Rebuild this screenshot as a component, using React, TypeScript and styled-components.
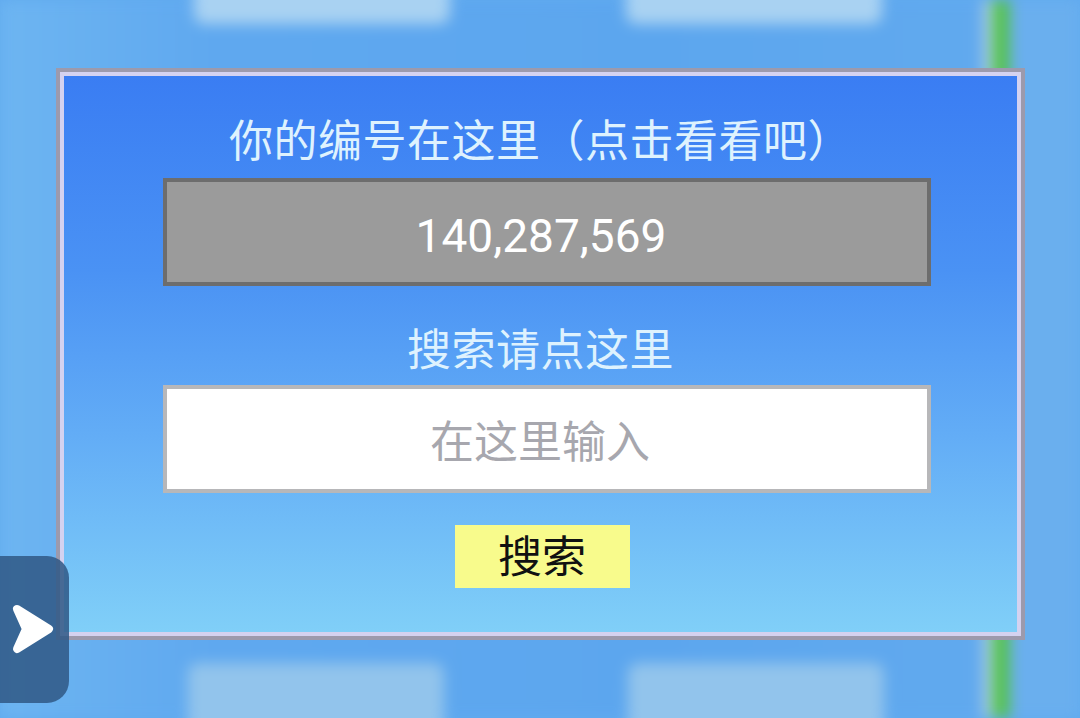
import React from "react";
import styled, { createGlobalStyle } from "styled-components";

const Global = createGlobalStyle`
  html, body {
    margin: 0;
    padding: 0;
    background: #60aaef;
    overflow: hidden;
  }
  * { box-sizing: border-box; }
`;

const CJK = `"Noto Sans CJK SC", "Noto Sans", sans-serif`;

const Screen = styled.div`
  position: relative;
  width: 1080px;
  height: 718px;
  overflow: hidden;
  background: #60aaef;
  font-family: ${CJK};
`;

/* Blurred game board behind the dialog */
const Scene = styled.div`
  display: flex;
  width: 100%;
  height: 100%;
  filter: blur(7px);
  background: linear-gradient(90deg, #6db5f1 0%, #5fa8ef 20%, #5ca6ee 60%, #62aaee 100%);
`;

const SceneMain = styled.div`
  width: 980px;
  display: flex;
  flex-direction: column;
  justify-content: space-between;
`;

const CardRow = styled.div<{ $edge: "top" | "bottom" }>`
  display: flex;
  gap: ${(p) => (p.$edge === "top" ? "176px" : "184px")};
  padding-left: ${(p) => (p.$edge === "top" ? "194px" : "188px")};
  margin-top: ${(p) => (p.$edge === "top" ? "-40px" : "0")};
  margin-bottom: ${(p) => (p.$edge === "bottom" ? "-60px" : "0")};
`;

const GhostCard = styled.div<{ $edge: "top" | "bottom" }>`
  width: 256px;
  height: ${(p) => (p.$edge === "top" ? "64px" : "115px")};
  border-radius: 10px;
  background: ${(p) => (p.$edge === "top" ? "#a9d2f2" : "#92c4ec")};
`;

const Glint = styled.div`
  width: 12px;
  background: linear-gradient(90deg, #73b0e8, #c2dbeb);
`;

const GreenBar = styled.div`
  width: 18px;
  background: #55c250;
`;

const SceneRest = styled.div`
  flex: 1;
  background: #6aafee;
`;

/* Modal layer */
const Overlay = styled.div`
  position: absolute;
  inset: 0;
  padding: 68px 55px 78px 56px;
  display: flex;
`;

const Dialog = styled.div`
  flex: 1;
  display: flex;
  border: 4px solid #9c9aad;
`;

const Panel = styled.div`
  flex: 1;
  border: 4px solid #d4d2f0;
  background: linear-gradient(180deg, #3a7df3 0%, #4a92f4 35%, #63adf6 65%, #80cff8 100%);
  display: flex;
  flex-direction: column;
  align-items: center;
  padding-top: 34px;
`;

const Heading = styled.div<{ $gap?: number }>`
  font-size: 44px;
  line-height: 56px;
  color: #def2fe;
  letter-spacing: 0.5px;
  margin-top: ${(p) => p.$gap ?? 0}px;
`;

const FieldBox = styled.div<{ $variant: "number" | "input"; $gap: number }>`
  width: 768px;
  height: 108px;
  margin-top: ${(p) => p.$gap}px;
  margin-left: 13px;
  display: flex;
  align-items: center;
  justify-content: center;
  border: 4px solid ${(p) => (p.$variant === "number" ? "#6d6d6d" : "#b7b7b9")};
  background: ${(p) => (p.$variant === "number" ? "#9b9b9b" : "#ffffff")};
`;

const NumberText = styled.span`
  font-family: Roboto, "Liberation Sans", sans-serif;
  font-size: 46px;
  color: #ffffff;
  margin-left: -12px;
  padding-top: 8px;
`;

const Placeholder = styled.span`
  font-family: ${CJK};
  font-size: 44px;
  color: #a7a7ae;
  margin-left: -14px;
`;

const SearchButton = styled.button`
  margin-top: 32px;
  margin-left: 3px;
  width: 175px;
  height: 63px;
  border: none;
  padding: 0 0 4px;
  background: #f8fb8c;
  font-family: ${CJK};
  font-size: 44px;
  line-height: 59px;
  color: #111111;
  cursor: pointer;
`;

const SideTab = styled.div`
  position: absolute;
  left: 0;
  top: 556px;
  width: 69px;
  height: 147px;
  border-radius: 0 22px 22px 0;
  background: rgba(48, 88, 134, 0.86);
  display: flex;
  align-items: center;
  padding-left: 11px;
  padding-bottom: 2px;
`;

export default function App() {
  return (
    <>
      <Global />
      <Screen>
        <Scene>
          <SceneMain>
            <CardRow $edge="top">
              <GhostCard $edge="top" />
              <GhostCard $edge="top" />
            </CardRow>
            <CardRow $edge="bottom">
              <GhostCard $edge="bottom" />
              <GhostCard $edge="bottom" />
            </CardRow>
          </SceneMain>
          <Glint />
          <GreenBar />
          <SceneRest />
        </Scene>

        <Overlay>
          <Dialog>
            <Panel>
              <Heading>你的编号在这里（点击看看吧）</Heading>
              <FieldBox $variant="number" $gap={12}>
                <NumberText>140,287,569</NumberText>
              </FieldBox>
              <Heading $gap={33}>搜索请点这里</Heading>
              <FieldBox $variant="input" $gap={10}>
                <Placeholder>在这里输入</Placeholder>
              </FieldBox>
              <SearchButton>搜索</SearchButton>
            </Panel>
          </Dialog>
        </Overlay>

        <SideTab>
          <svg width="44" height="52" viewBox="0 0 44 52">
            <path
              d="M6 6 L38 26 L6 46 L15 26 Z"
              fill="#ffffff"
              stroke="#ffffff"
              strokeWidth="8"
              strokeLinejoin="round"
            />
          </svg>
        </SideTab>
      </Screen>
    </>
  );
}
